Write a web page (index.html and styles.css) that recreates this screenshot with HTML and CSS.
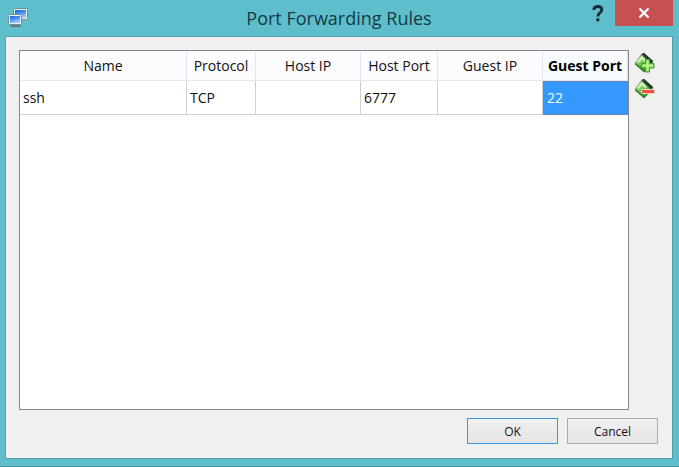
FILE: index.html
```html
<!DOCTYPE html>
<html lang="en">
<head>
<meta charset="utf-8">
<title>Port Forwarding Rules</title>
<link rel="stylesheet" href="styles.css">
</head>
<body>
<main class="window">
  <header class="titlebar">
    <svg class="app-icon" width="20" height="20" viewBox="0 0 20 20" aria-hidden="true">
      <defs>
        <linearGradient id="screen" x1="0" y1="0" x2=".4" y2="1">
          <stop offset="0" stop-color="#1c62d6"/>
          <stop offset=".5" stop-color="#4790ee"/>
          <stop offset="1" stop-color="#9accfa"/>
        </linearGradient>
      </defs>
      <rect x="5.500" y=".5" width="14" height="11" rx="1" fill="#e9eff2" stroke="#6d8f9c"/>
      <rect x="7" y="2" width="11" height="8" fill="url(#screen)"/>
      <path d="M3 17h9l1 2H2z" fill="#66787e"/>
      <rect x=".5" y="6.500" width="13" height="10" rx="1" fill="#e9eff2" stroke="#6d8f9c"/>
      <rect x="2" y="8" width="10" height="7" fill="url(#screen)"/>
    </svg>
    <h1 class="title">Port Forwarding Rules</h1>
    <div class="caption-buttons">
      <button class="help" type="button" aria-label="Help">
        <svg width="12" height="17" viewBox="0 0 12 17"><path d="M1.700 5C1.900 2.600 3.400 1.500 5.800 1.500c2.500 0 4 1.200 4 3.200 0 3-4 3.300-4 6.800" fill="none" stroke="#182a30" stroke-width="2.800"/><rect x="4.300" y="13.300" width="3" height="3" fill="#182a30"/></svg>
      </button>
      <button class="close" type="button" aria-label="Close">
        <svg width="12" height="10" viewBox="0 0 12 10"><path d="M1.500.5l9 9M10.500.5l-9 9" stroke="#fff" stroke-width="2.200"/></svg>
      </button>
    </div>
  </header>
  <form class="client">
    <div class="rules">
      <div class="frame">
        <table class="grid">
          <colgroup>
            <col><col class="protocol"><col class="ip"><col class="port"><col class="ip"><col class="guest-port">
          </colgroup>
          <thead>
            <tr><th>Name</th><th>Protocol</th><th>Host IP</th><th>Host Port</th><th>Guest IP</th><th class="current">Guest Port</th></tr>
          </thead>
          <tbody>
            <tr><td>ssh</td><td>TCP</td><td></td><td>6777</td><td></td><td class="selected">22</td></tr>
          </tbody>
        </table>
      </div>
      <div class="tools">
        <button class="tool" type="button" aria-label="Add rule">
          <svg width="22" height="22" viewBox="0 0 22 22">
            <defs>
              <linearGradient id="card" x1="0" y1="0" x2=".6" y2="1">
                <stop offset="0" stop-color="#b9e69a"/>
                <stop offset=".5" stop-color="#86cf62"/>
                <stop offset="1" stop-color="#3f9f2c"/>
              </linearGradient>
            </defs>
            <path d="M8 1.500l2-.5 9 8-1 3-8 7.500-9-8.500z" fill="#3c5a34"/>
            <path d="M8.500 1.500L10 1l9 8-1.500 2z" fill="#23351f"/>
            <path d="M1 10.500L7.500 3l9 8.500-6.500 7z" fill="url(#card)"/>
            <path d="M1 10.500l9 8 6-6.500v2l-6 6.500-9-8z" fill="#318524"/>
            <path d="M4 10l4-4.500 4 4" fill="none" stroke="#d5f3be" stroke-width="2"/>
            <path d="M11.500 7.500h4v4h4.500v4.500h-4.500v4h-4v-4H7.500v-4.500h4z" fill="#7fdb52" stroke="#3f9a2f"/>
            <path d="M13.500 8.500v10.500M8.500 13.500h10.500" stroke="#b9f294" stroke-width="2"/>
          </svg>
        </button>
        <button class="tool" type="button" aria-label="Remove rule">
          <svg width="22" height="22" viewBox="0 0 22 22">
            <path d="M8 1.500l2-.5 9 8-1 3-8 7.500-9-8.500z" fill="#3c5a34"/>
            <path d="M8.500 1.500L10 1l9 8-1.500 2z" fill="#23351f"/>
            <path d="M1 10.500L7.500 3l9 8.500-6.500 7z" fill="url(#card)"/>
            <path d="M1 10.500l9 8 6-6.500v2l-6 6.500-9-8z" fill="#318524"/>
            <path d="M4 10l4-4.500 4 4" fill="none" stroke="#d5f3be" stroke-width="2"/>
            <rect x="7.500" y="11.500" width="13" height="4" rx="1" fill="#ee5244" stroke="#f8d5cc"/>
          </svg>
        </button>
      </div>
    </div>
    <div class="actions">
      <button class="push default" type="button">OK</button>
      <button class="push" type="button">Cancel</button>
    </div>
  </form>
</main>
</body>
</html>
```
FILE: styles.css
```css
* {
  box-sizing: border-box;
}

body {
  margin: 0;
  font-family: "Open Sans", "Noto Sans", sans-serif;
  color: #111;
}

button {
  margin: 0;
  padding: 0;
  border: 0;
  background: none;
  font-family: inherit;
  color: inherit;
}

svg {
  display: block;
}

.window {
  display: flex;
  flex-direction: column;
  min-height: 100vh;
  padding: 0 6px 7px 5px;
  background: #5fbecc;
  border-bottom: 1px solid #3f919d;
}

.titlebar {
  display: grid;
  grid-template-columns: 1fr auto 1fr;
  height: 36px;
}

.app-icon {
  margin: 8px 0 0 3px;
}

.title {
  margin: 0;
  font-size: 18px;
  line-height: 36px;
  font-weight: 400;
  color: #123a44;
}

.caption-buttons {
  display: flex;
  justify-content: flex-end;
  align-items: flex-start;
}

.help {
  display: grid;
  place-items: center;
  width: 34px;
  height: 26px;
}

.close {
  display: grid;
  place-items: center;
  width: 58px;
  height: 26px;
  background: #c75050;
}

.client {
  flex: 1;
  display: flex;
  flex-direction: column;
  gap: 8px;
  padding: 13px 14px 14px 13px;
  background: #f0f0f0;
  border: 1px solid #56a0ab;
}

.rules {
  flex: 1;
  display: flex;
  gap: 5px;
}

.frame {
  flex: 1;
  background: #fff;
  border: 1px solid #828790;
}

.grid {
  width: 100%;
  table-layout: fixed;
  border-collapse: separate;
  border-spacing: 0;
  font-size: 14px;
  line-height: 20px;
}

.protocol {
  width: 69px;
}

.ip {
  width: 105px;
}

.port {
  width: 77px;
}

.guest-port {
  width: 85px;
}

.grid th,
.grid td {
  padding: 0 3px;
  white-space: nowrap;
}

.grid th {
  height: 30px;
  padding: 0;
  font-weight: 400;
  background: #fcfcfe;
  border-right: 1px solid #e4e6f4;
  border-bottom: 1px solid #e4e6f4;
}

.grid td {
  height: 34px;
  border-right: 1px solid #d0d0d0;
  border-bottom: 1px solid #d0d0d0;
}

.grid .current {
  font-weight: 700;
  background: #f8fbfd;
  color: #000;
}

.grid .selected {
  background: #3399ff;
  border: 1px solid #6b88aa;
  color: #fff;
}

.tools {
  display: flex;
  flex-direction: column;
  gap: 4px;
  width: 24px;
  padding-top: 2px;
}

.tool {
  width: 22px;
  height: 22px;
}

.actions {
  display: flex;
  justify-content: flex-end;
  gap: 9px;
}

.push {
  width: 91px;
  height: 26px;
  font-size: 12px;
  background: linear-gradient(#f0f0f0, #e5e5e5);
  border: 1px solid #acacac;
}

.default {
  border-color: #3399e6;
}
```
